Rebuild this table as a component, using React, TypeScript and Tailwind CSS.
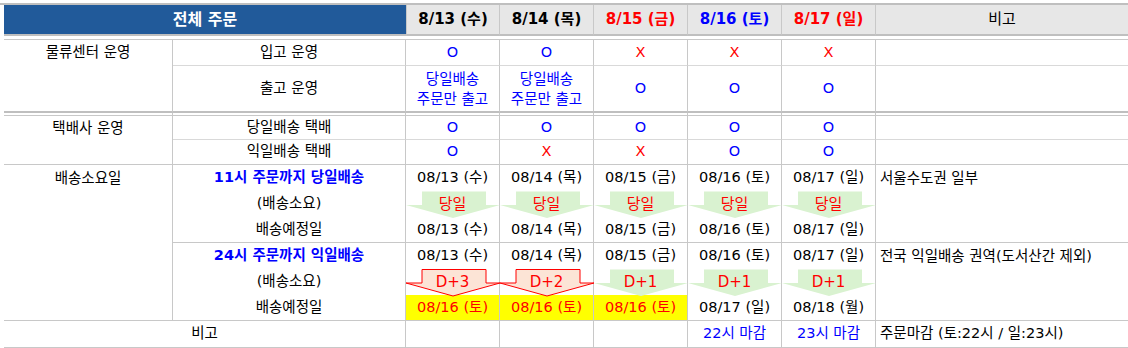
import React from "react";

type Mark = "O" | "X";

const line = "border-[#c8c8c8]";

const Arrow = ({ label, tone }: { label: string; tone: "green" | "red" }) => (
  <td className={`relative h-[26px] p-0 border-r ${line} text-center`}>
    <svg
      className="absolute left-0 top-0 z-10 overflow-visible"
      width="95"
      height="29"
      viewBox="0 0 95 29"
    >
      <path
        d="M16,0.5 H80 V14 H94 L47,27 L0,14 H16 Z"
        fill={tone === "green" ? "#d9f2d0" : "#fce4d6"}
        stroke={tone === "green" ? "none" : "#ff0000"}
        strokeWidth="1"
      />
    </svg>
    <span className="relative z-20 text-[#ff0000] text-[15px] leading-[24px]">{label}</span>
  </td>
);

const MarkCell = ({ v }: { v: Mark }) => (
  <td className={`p-0 border-r border-b ${line} border-b-[#d9d9d9] text-center`}>
    <span className={v === "O" ? "text-[#0000ff]" : "text-[#ff0000]"}>{v}</span>
  </td>
);

const dates = ["08/13 (수)", "08/14 (목)", "08/15 (금)", "08/16 (토)", "08/17 (일)"];

export default function App() {
  return (
    <div className="w-[1128px] h-[348px] overflow-hidden bg-white pt-[3px] font-['DejaVu_Sans','Noto_Sans_CJK_KR',sans-serif] text-[14.5px] text-black">
      <div className="border-t-2 border-[#bfbfbf]">
        <table className="ml-[4px] w-[1124px] table-fixed border-separate border-spacing-0">
          <colgroup>
            <col className="w-[169px]" />
            <col className="w-[233px]" />
            <col className="w-[94px]" />
            <col className="w-[94px]" />
            <col className="w-[94px]" />
            <col className="w-[94px]" />
            <col className="w-[94px]" />
            <col className="w-[252px]" />
          </colgroup>
          <tbody>
            {/* header */}
            <tr>
              <td colSpan={2} className="h-[31px] p-0 bg-[#215a9a] text-white font-bold text-[16px] text-center border-b-2 border-[#bfbfbf]">
                전체 주문
              </td>
              {[
                ["8/13 (수)", "text-black"],
                ["8/14 (목)", "text-black"],
                ["8/15 (금)", "text-[#ff0000]"],
                ["8/16 (토)", "text-[#0000ff]"],
                ["8/17 (일)", "text-[#ff0000]"],
              ].map(([d, c], i) => (
                <td
                  key={d}
                  className={`p-0 bg-[#e7e7e7] font-bold text-[15px] text-center border-b-2 border-b-[#bfbfbf] ${i === 0 ? "border-l" : ""} border-r ${line} ${c}`}
                >
                  {d}
                </td>
              ))}
              <td className="p-0 bg-[#e7e7e7] text-[15px] text-center border-b-2 border-[#bfbfbf]">비고</td>
            </tr>
            <tr>
              <td colSpan={8} className="h-[4px] p-0 border-b border-[#c8c8c8]" />
            </tr>

            {/* 물류센터 */}
            <tr>
              <td rowSpan={2} className={`p-0 align-top text-center leading-[25px] border-r border-b-2 ${line} border-b-[#bfbfbf]`}>
                물류센터 운영
              </td>
              <td className={`h-[26px] p-0 text-center border-r border-b ${line} border-b-[#d9d9d9]`}>입고 운영</td>
              {(["O", "O", "X", "X", "X"] as Mark[]).map((v, i) => (
                <MarkCell key={i} v={v} />
              ))}
              <td className="p-0 border-b border-[#d9d9d9]" />
            </tr>
            <tr>
              <td className={`h-[47px] p-0 text-center border-r border-b-2 ${line} border-b-[#bfbfbf]`}>출고 운영</td>
              {[0, 1].map((i) => (
                <td key={i} className={`p-0 text-center text-[#0000ff] leading-[20px] border-r border-b-2 ${line} border-b-[#bfbfbf]`}>
                  당일배송
                  <br />
                  주문만 출고
                </td>
              ))}
              {[0, 1, 2].map((i) => (
                <td key={i} className={`p-0 text-center text-[#0000ff] border-r border-b-2 ${line} border-b-[#bfbfbf]`}>
                  O
                </td>
              ))}
              <td className="p-0 border-b-2 border-[#bfbfbf]" />
            </tr>
            <tr>
              {Array.from({ length: 8 }).map((_, i) => (
                <td key={i} className={`h-[3px] p-0 border-b ${line} ${i < 7 ? "border-r" : ""}`} />
              ))}
            </tr>

            {/* 택배사 */}
            <tr>
              <td rowSpan={2} className={`p-0 align-top text-center leading-[24px] border-r border-b ${line}`}>
                택배사 운영
              </td>
              <td className={`h-[24px] p-0 text-center border-r border-b ${line} border-b-[#d9d9d9]`}>당일배송 택배</td>
              {(["O", "O", "O", "O", "O"] as Mark[]).map((v, i) => (
                <MarkCell key={i} v={v} />
              ))}
              <td className="p-0 border-b border-[#d9d9d9]" />
            </tr>
            <tr>
              <td className={`h-[25px] p-0 text-center border-r border-b ${line}`}>익일배송 택배</td>
              {(["O", "X", "X", "O", "O"] as Mark[]).map((v, i) => (
                <td key={i} className={`p-0 text-center border-r border-b ${line}`}>
                  <span className={v === "O" ? "text-[#0000ff]" : "text-[#ff0000]"}>{v}</span>
                </td>
              ))}
              <td className={`p-0 border-b ${line}`} />
            </tr>

            {/* 11시 당일배송 */}
            <tr>
              <td rowSpan={6} className={`p-0 align-top text-center leading-[26px] border-r border-b ${line}`}>
                배송소요일
              </td>
              <td className={`h-[26px] p-0 text-center font-bold text-[#0000ff] border-r ${line}`}>11시 주문까지 당일배송</td>
              {dates.map((d) => (
                <td key={d} className={`p-0 text-center border-r ${line}`}>
                  {d}
                </td>
              ))}
              <td rowSpan={3} className={`p-0 pl-[4px] align-top leading-[26px] border-b ${line}`}>
                서울수도권 일부
              </td>
            </tr>
            <tr>
              <td className={`h-[26px] p-0 text-center border-r ${line}`}>(배송소요)</td>
              {dates.map((d) => (
                <Arrow key={d} label="당일" tone="green" />
              ))}
            </tr>
            <tr>
              <td className={`h-[26px] p-0 text-center border-r border-b ${line}`}>배송예정일</td>
              {dates.map((d) => (
                <td key={d} className={`p-0 text-center border-r border-b ${line}`}>
                  {d}
                </td>
              ))}
            </tr>

            {/* 24시 익일배송 */}
            <tr>
              <td className={`h-[26px] p-0 text-center font-bold text-[#0000ff] border-r ${line}`}>24시 주문까지 익일배송</td>
              {dates.map((d) => (
                <td key={d} className={`p-0 text-center border-r ${line}`}>
                  {d}
                </td>
              ))}
              <td rowSpan={3} className={`p-0 pl-[4px] align-top leading-[26px] border-b ${line}`}>
                전국 익일배송 권역(도서산간 제외)
              </td>
            </tr>
            <tr>
              <td className={`h-[26px] p-0 text-center border-r ${line}`}>(배송소요)</td>
              <Arrow label="D+3" tone="red" />
              <Arrow label="D+2" tone="red" />
              <Arrow label="D+1" tone="green" />
              <Arrow label="D+1" tone="green" />
              <Arrow label="D+1" tone="green" />
            </tr>
            <tr>
              <td className={`h-[26px] p-0 text-center border-r border-b ${line}`}>배송예정일</td>
              {[0, 1, 2].map((i) => (
                <td key={i} className={`p-0 text-center bg-[#ffff00] text-[#ff0000] border-r border-b ${line}`}>
                  08/16 (토)
                </td>
              ))}
              <td className={`p-0 text-center border-r border-b ${line}`}>08/17 (일)</td>
              <td className={`p-0 text-center border-r border-b ${line}`}>08/18 (월)</td>
            </tr>

            {/* 비고 */}
            <tr>
              <td colSpan={2} className={`h-[27px] p-0 text-center border-r border-b ${line}`}>
                비고
              </td>
              <td className={`p-0 border-r border-b ${line}`} />
              <td className={`p-0 border-r border-b ${line}`} />
              <td className={`p-0 border-r border-b ${line}`} />
              <td className={`p-0 text-center text-[#0000ff] border-r border-b ${line}`}>22시 마감</td>
              <td className={`p-0 text-center text-[#0000ff] border-r border-b ${line}`}>23시 마감</td>
              <td className={`p-0 pl-[4px] border-b ${line}`}>주문마감 (토:22시 / 일:23시)</td>
            </tr>
          </tbody>
        </table>
      </div>
    </div>
  );
}
